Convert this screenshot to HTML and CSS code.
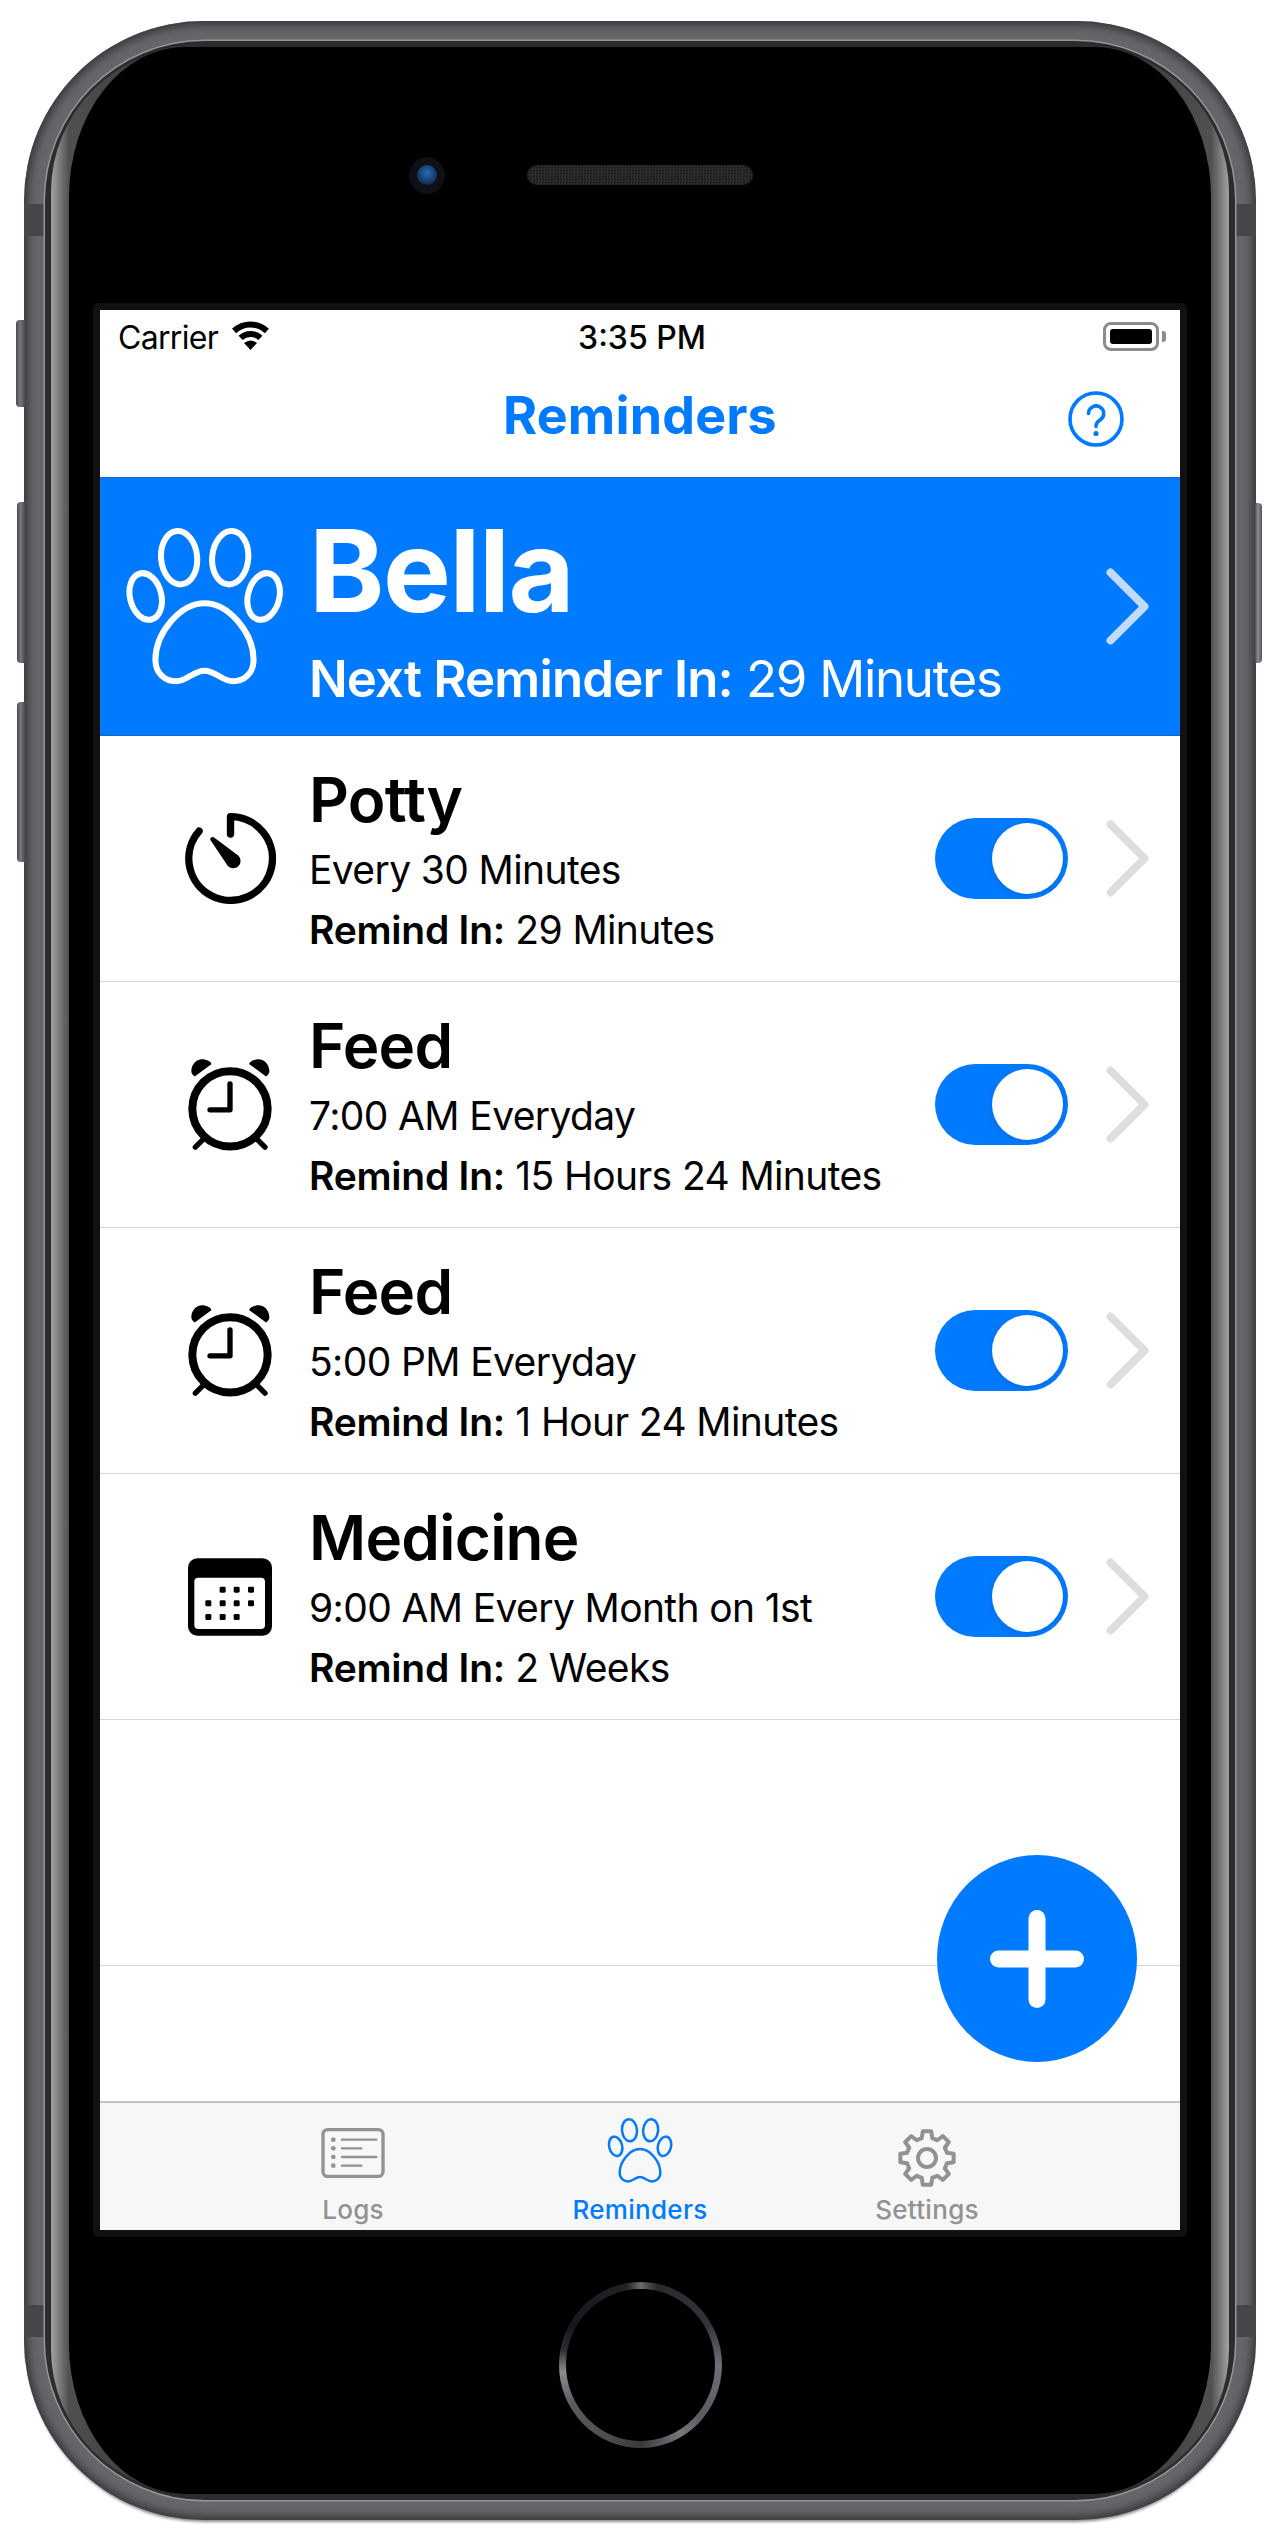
FILE: index.html
```html
<!DOCTYPE html>
<html lang="en">
<head>
<meta charset="utf-8">
<title>Reminders</title>
<link rel="stylesheet" href="styles.css">
</head>
<body>
<svg class="defs" width="0" height="0" aria-hidden="true">
  <symbol id="paw" viewBox="108 175 470 470">
    <ellipse cx="267" cy="264" rx="54" ry="80" transform="rotate(-5 267 264)"/>
    <ellipse cx="420" cy="264" rx="54" ry="80" transform="rotate(5 420 264)"/>
    <ellipse cx="167" cy="380" rx="47" ry="71" transform="rotate(-14 167 380)"/>
    <ellipse cx="520" cy="380" rx="47" ry="71" transform="rotate(14 520 380)"/>
    <path d="M343 400C270 400 196 490 196 570C196 610 225 634 258 634C290 634 310 602 343 602C376 602 396 634 428 634C461 634 490 610 490 570C490 490 416 400 343 400Z"/>
  </symbol>
  <symbol id="chevron" viewBox="0 0 43 77">
    <path d="M4.5 4.5L38.5 38.5L4.5 72.5"/>
  </symbol>
  <symbol id="alarm" viewBox="50 50 264 284">
    <circle cx="182" cy="205" r="113" fill="none" stroke="#000" stroke-width="24"/>
    <path d="M182 130V208H122" fill="none" stroke="#000" stroke-width="16" stroke-linecap="round" stroke-linejoin="round"/>
    <path d="M100 298L78 320M265 298L287 320" fill="none" stroke="#000" stroke-width="16" stroke-linecap="round"/>
    <path d="M66 90C68 66 88 52 108 58C118 60 126 65 126 71L76 108C70 104 65 98 66 90Z"/>
    <path d="M300 90C298 66 278 52 258 58C248 60 240 65 240 71L290 108C296 104 301 98 300 90Z"/>
  </symbol>
</svg>

<div class="phone">
  <span class="side-btn mute"></span>
  <span class="side-btn vol-up"></span>
  <span class="side-btn vol-down"></span>
  <span class="side-btn power"></span>
  <span class="antenna top-left"></span>
  <span class="antenna top-right"></span>
  <span class="antenna bottom-left"></span>
  <span class="antenna bottom-right"></span>

  <div class="rim">
    <div class="band">
      <div class="face">
        <div class="face-top">
          <div class="camera"><span class="lens"></span></div>
          <div class="speaker"></div>
        </div>

        <div class="bezel">
          <div class="screen">
            <div class="status-bar">
              <div class="status-left">
                <span class="carrier">Carrier</span>
                <svg class="wifi" viewBox="0 0 39 29">
                  <path d="M3.1 10A24 24 0 0 1 35.9 10M9.6 16.9A14.5 14.5 0 0 1 29.4 16.9" fill="none" stroke="#000" stroke-width="6"/>
                  <path d="M19.5 29L13 22Q19.5 17 26 22Z"/>
                </svg>
              </div>
              <span class="time">3:35 PM</span>
              <div class="status-right">
                <span class="battery"><span class="battery-fill"></span></span>
                <span class="battery-nub"></span>
              </div>
            </div>

            <div class="nav-bar">
              <span></span>
              <h1 class="nav-title">Reminders</h1>
              <svg class="help" viewBox="0 0 56 56">
                <circle cx="28" cy="28" r="26"/>
                <path d="M20.5 22.5a7.6 7.6 0 1 1 11.5 6.6c-3 1.7-4 3-4 6.4"/>
                <circle class="help-dot" cx="28" cy="42.5" r="2.6"/>
              </svg>
            </div>

            <div class="dog-header">
              <div class="header-icon">
                <svg class="paw-large"><use href="#paw"/></svg>
              </div>
              <div class="header-text">
                <div class="dog-name">Bella</div>
                <div class="dog-next"><strong>Next Reminder In:</strong> 29 Minutes</div>
              </div>
              <svg class="chevron chevron-light"><use href="#chevron"/></svg>
            </div>

            <div class="row">
              <div class="row-icon">
                <svg class="icon-timer" viewBox="285 1035 272 272">
                  <path d="M421 1098V1046A125 125 0 1 1 327 1089" fill="none" stroke="#000" stroke-width="22" stroke-linecap="round" stroke-linejoin="round"/>
                  <path d="M360 1114Q362 1104 372 1108L444 1162A22 22 0 1 1 412 1192Z"/>
                </svg>
              </div>
              <div class="row-text">
                <div class="row-name">Potty</div>
                <div class="row-line first">Every 30 Minutes</div>
                <div class="row-line"><strong>Remind In:</strong> 29 Minutes</div>
              </div>
              <div class="toggle"><span class="knob"></span></div>
              <svg class="chevron"><use href="#chevron"/></svg>
            </div>

            <div class="row">
              <div class="row-icon">
                <svg class="icon-alarm"><use href="#alarm"/></svg>
              </div>
              <div class="row-text">
                <div class="row-name">Feed</div>
                <div class="row-line first">7:00 AM Everyday</div>
                <div class="row-line"><strong>Remind In:</strong> 15 Hours 24 Minutes</div>
              </div>
              <div class="toggle"><span class="knob"></span></div>
              <svg class="chevron"><use href="#chevron"/></svg>
            </div>

            <div class="row">
              <div class="row-icon">
                <svg class="icon-alarm"><use href="#alarm"/></svg>
              </div>
              <div class="row-text">
                <div class="row-name">Feed</div>
                <div class="row-line first">5:00 PM Everyday</div>
                <div class="row-line"><strong>Remind In:</strong> 1 Hour 24 Minutes</div>
              </div>
              <div class="toggle"><span class="knob"></span></div>
              <svg class="chevron"><use href="#chevron"/></svg>
            </div>

            <div class="row">
              <div class="row-icon">
                <svg class="icon-calendar" viewBox="0 0 252 232">
                  <rect width="252" height="232" rx="28"/>
                  <rect class="cal-page" x="19" y="58" width="212" height="154" rx="12"/>
                  <g>
                    <rect x="95" y="85" width="18" height="18" rx="4"/><rect x="137" y="85" width="18" height="18" rx="4"/><rect x="180" y="85" width="18" height="18" rx="4"/>
                    <rect x="52" y="126" width="18" height="18" rx="4"/><rect x="95" y="126" width="18" height="18" rx="4"/><rect x="137" y="126" width="18" height="18" rx="4"/><rect x="180" y="126" width="18" height="18" rx="4"/>
                    <rect x="52" y="167" width="18" height="18" rx="4"/><rect x="95" y="167" width="18" height="18" rx="4"/><rect x="137" y="167" width="18" height="18" rx="4"/>
                  </g>
                </svg>
              </div>
              <div class="row-text">
                <div class="row-name">Medicine</div>
                <div class="row-line first">9:00 AM Every Month on 1st</div>
                <div class="row-line"><strong>Remind In:</strong> 2 Weeks</div>
              </div>
              <div class="toggle"><span class="knob"></span></div>
              <svg class="chevron"><use href="#chevron"/></svg>
            </div>

            <div class="row"></div>
            <div class="spacer"></div>

            <div class="tab-bar">
              <div class="tab">
                <div class="tab-icon">
                  <svg class="icon-logs" viewBox="0 0 190 150">
                    <rect class="logs-frame" x="5" y="5" width="180" height="140" rx="14"/>
                    <circle cx="36" cy="35" r="7"/><circle cx="36" cy="61" r="7"/><circle cx="36" cy="87" r="7"/><circle cx="36" cy="113" r="7"/>
                    <path class="logs-lines" d="M62 35H165M62 61H120M62 87H165M62 113H120"/>
                  </svg>
                </div>
                <span class="tab-label">Logs</span>
              </div>
              <div class="tab active">
                <div class="tab-icon">
                  <svg class="paw-small"><use href="#paw"/></svg>
                </div>
                <span class="tab-label">Reminders</span>
              </div>
              <div class="tab">
                <div class="tab-icon">
                  <svg class="icon-gear" viewBox="0 0 60 60">
                    <path d="M34.22 3.33L35.31 10.2A20.5 20.5 0 0 1 40.25 12.25L45.87 8.16L51.84 14.13L47.75 19.75A20.5 20.5 0 0 1 49.8 24.69L56.67 25.78V34.22L49.8 35.31A20.5 20.5 0 0 1 47.75 40.25L51.84 45.87L45.87 51.84L40.25 47.75A20.5 20.5 0 0 1 35.31 49.8L34.22 56.67H25.78L24.69 49.8A20.5 20.5 0 0 1 19.75 47.75L14.13 51.84L8.16 45.87L12.25 40.25A20.5 20.5 0 0 1 10.2 35.31L3.33 34.22V25.78L10.2 24.69A20.5 20.5 0 0 1 12.25 19.75L8.16 14.13L14.13 8.16L19.75 12.25A20.5 20.5 0 0 1 24.69 10.2L25.78 3.33Z"/>
                    <circle cx="30" cy="30" r="9"/>
                  </svg>
                </div>
                <span class="tab-label">Settings</span>
              </div>
            </div>

            <div class="fab">
              <svg class="fab-plus" viewBox="0 0 94 98">
                <rect x="38.5" width="17" height="98" rx="8.5"/>
                <rect y="40.5" width="94" height="17" rx="8.5"/>
              </svg>
            </div>
          </div>
        </div>

        <div class="face-bottom">
          <div class="home-btn"><span class="home-inner"></span></div>
        </div>
      </div>
    </div>
  </div>
</div>
</body>
</html>
```

FILE: styles.css
```css
* { box-sizing: border-box; }

html, body {
  margin: 0;
  padding: 0;
  background: #fff;
}

body {
  width: 1280px;
  height: 2540px;
  overflow: hidden;
  font-family: "Inter", "Liberation Sans", sans-serif;
  color: #000;
}

.defs { position: absolute; }

/* Device shell */
.phone {
  position: relative;
  width: 1232px;
  height: 2499px;
  margin: 21px 24px 20px;
  padding: 20px 21px;
  border-radius: 180px;
  background: #66666a;
  box-shadow: inset 0 0 9px 4px #37373b, 0 4px 3px -2px rgba(0, 0, 0, .45);
}

.side-btn {
  position: absolute;
  border-radius: 4px 0 0 4px;
  background: linear-gradient(90deg, #4a4a4e, #77777c 45%, #4a4a4e);
}
.mute { left: -8px; top: 299px; width: 9px; height: 87px; }
.vol-up { left: -7px; top: 481px; width: 8px; height: 161px; }
.vol-down { left: -7px; top: 681px; width: 8px; height: 160px; }
.power { right: -6px; top: 482px; width: 7px; height: 160px; border-radius: 0 4px 4px 0; background: linear-gradient(90deg, #4a4a4e, #8d8d92 40%, #55555a); }

.antenna {
  position: absolute;
  width: 21px;
  height: 32px;
  background: #47474b;
}
.top-left { left: 0; top: 183px; }
.top-right { right: 0; top: 183px; }
.bottom-left { left: 0; top: 2284px; }
.bottom-right { right: 0; top: 2284px; }

.rim {
  position: relative;
  height: 100%;
  padding: 6px;
  border-radius: 160px;
  background: #2c2c2c;
  box-shadow: 0 0 0 1.5px #96969a;
}

.band {
  height: 100%;
  padding: 0 18px;
  border-radius: 145px;
  background: linear-gradient(90deg, #a2a2a2 0, #8c8c8c 5px, #505050 18px, #3c3c3c 90px, #3c3c3c calc(100% - 90px), #505050 calc(100% - 18px), #8c8c8c calc(100% - 5px), #a2a2a2 100%);
}

.face {
  height: 100%;
  display: flex;
  flex-direction: column;
  background: #000;
  border-radius: 116px / 150px;
}

.face-top {
  height: 256px;
  display: flex;
  align-items: center;
  gap: 83px;
  padding-left: 340px;
}

.camera {
  width: 36px;
  height: 37px;
  display: flex;
  align-items: center;
  justify-content: center;
  border-radius: 50%;
  background: #0d1014;
}
.lens {
  width: 20px;
  height: 20px;
  border-radius: 50%;
  background: radial-gradient(circle at 50% 40%, #2a6fb0 0, #1b4e85 35%, #0a2240 90%);
}

.speaker {
  width: 224px;
  height: 18px;
  border-radius: 9px;
  background: repeating-conic-gradient(#2f2f2f 0 25%, #1c1c1c 0 50%) 0 0 / 3px 3px;
  box-shadow: 0 0 0 1px #262626;
}

.face-bottom {
  height: 256px;
  display: flex;
  align-items: center;
  justify-content: center;
}

.home-btn {
  width: 163px;
  height: 166px;
  padding: 7px;
  border-radius: 50%;
  background: conic-gradient(#6a6a6e 0deg, #2a2a2e 12deg, #33333a 60deg, #6e6e74 90deg, #5a5a60 130deg, #77777c 150deg, #38383c 180deg, #4a4a4e 200deg, #5a5a60 240deg, #8a8a90 265deg, #2a2a2e 282deg, #18181c 300deg, #222226 350deg, #6a6a6e 360deg);
}
.home-inner {
  display: block;
  width: 100%;
  height: 100%;
  border-radius: 50%;
  background: #000;
}

.bezel {
  height: 1934px;
  margin: 0 24px;
  padding: 7px;
  border-radius: 6px;
  background: #111;
}

/* App screen */
.screen {
  position: relative;
  width: 1080px;
  height: 1920px;
  overflow: hidden;
  background: #fff;
}

.status-bar {
  height: 52px;
  display: grid;
  grid-template-columns: 1fr auto 1fr;
  padding: 8px 14px 0 18px;
  font-size: 32px;
  line-height: 40px;
}
.status-left {
  display: flex;
  gap: 13px;
  align-items: flex-start;
}
.carrier { letter-spacing: -.7px; }
.wifi {
  width: 39px;
  height: 29px;
  margin-top: 3px;
}
.time { font-weight: 500; }
.status-right {
  display: flex;
  justify-content: flex-end;
  align-items: flex-start;
  padding-top: 4px;
}
.battery {
  width: 56px;
  height: 29px;
  padding: 4px;
  border: 3px solid #8b8b8b;
  border-radius: 8px;
  display: flex;
}
.battery-fill {
  flex: 1;
  background: #000;
  border-radius: 3px;
}
.battery-nub {
  width: 4px;
  height: 11px;
  margin: 9px 0 0 3px;
  border-radius: 0 3px 3px 0;
  background: #8b8b8b;
}

.nav-bar {
  height: 115px;
  display: grid;
  grid-template-columns: 1fr auto 1fr;
  align-items: start;
  padding-top: 24px;
}
.nav-title {
  margin: 0;
  font-size: 52px;
  line-height: 60px;
  font-weight: 700;
  letter-spacing: .15px;
  color: #007aff;
}
.help {
  justify-self: end;
  width: 56px;
  height: 56px;
  margin: 5px 56px 0 0;
  fill: none;
  stroke: #007aff;
  stroke-width: 3.6;
  stroke-linecap: round;
}
.help-dot { fill: #007aff; stroke: none; }

.dog-header {
  height: 259px;
  display: flex;
  align-items: center;
  background: #007aff;
  border-top: 1px solid #1269c4;
  border-bottom: 1px solid #1269c4;
  color: #fff;
}
.header-icon {
  width: 209px;
  padding-left: 26px;
  display: flex;
}
.paw-large {
  width: 157px;
  height: 157px;
  fill: none;
  stroke: #fff;
  stroke-width: 18;
}
.header-text {
  flex: 1;
  padding-top: 7.5px;
}
.dog-name {
  font-size: 114px;
  line-height: 120px;
  font-weight: 700;
  letter-spacing: -1.4px;
}
.dog-next {
  margin-top: 18px;
  font-size: 51px;
  line-height: 60px;
  letter-spacing: -1.3px;
}
.dog-next strong {
  font-weight: 600;
  letter-spacing: -.85px;
}

.chevron {
  width: 43px;
  height: 77px;
  margin-right: 31px;
  flex: none;
  fill: none;
  stroke: #dedede;
  stroke-width: 8;
  stroke-linecap: round;
  stroke-linejoin: round;
}
.chevron-light { stroke: #bfdcff; }

.row {
  height: 246px;
  display: flex;
  align-items: center;
  border-bottom: 1px solid #d6d6d6;
}
.row-icon {
  width: 209px;
  padding-left: 51px;
  display: flex;
  justify-content: center;
  flex: none;
}
.row-text {
  flex: 1;
  padding-top: 5px;
}
.row-name {
  font-size: 62px;
  line-height: 74px;
  font-weight: 600;
  letter-spacing: -.75px;
}
.row-line {
  font-size: 39px;
  line-height: 60px;
  letter-spacing: -.62px;
}
.row-line.first { margin-top: 3px; }
.row-line strong {
  font-weight: 600;
  letter-spacing: -.25px;
}

.icon-timer { width: 91px; height: 91px; }
.icon-alarm { width: 88px; height: 95px; }
.icon-calendar { width: 84px; height: 78px; }
.cal-page { fill: #fff; }

.toggle {
  width: 133px;
  height: 81px;
  margin-right: 38px;
  padding-right: 5px;
  display: flex;
  justify-content: flex-end;
  align-items: center;
  border-radius: 41px;
  background: #007aff;
}
.knob {
  width: 71px;
  height: 71px;
  border-radius: 50%;
  background: #fff;
  box-shadow: 0 2px 6px rgba(0, 0, 0, .12);
}

.spacer { height: 135px; }

.tab-bar {
  height: 129px;
  display: flex;
  justify-content: center;
  border-top: 2px solid #c2c2c2;
  background: #f7f7f7;
  color: #929292;
}
.tab {
  width: 287px;
  display: flex;
  flex-direction: column;
  align-items: center;
}
.tab-icon {
  height: 91px;
  display: flex;
  align-items: flex-start;
  justify-content: center;
}
.tab-label {
  font-size: 26px;
  line-height: 32px;
  font-weight: 500;
  letter-spacing: .3px;
}
.tab.active { color: #007aff; }

.icon-logs {
  width: 64px;
  height: 50px;
  margin-top: 25px;
  fill: #929292;
}
.logs-frame { fill: none; stroke: #929292; stroke-width: 10; }
.logs-lines { fill: none; stroke: #929292; stroke-width: 7; stroke-linecap: round; }
.paw-small {
  width: 66px;
  height: 65px;
  margin-top: 15px;
  fill: none;
  stroke: #007aff;
  stroke-width: 18;
}
.icon-gear {
  width: 60px;
  height: 60px;
  margin-top: 25px;
  fill: none;
  stroke: #929292;
  stroke-width: 4;
  stroke-linejoin: round;
}

.fab {
  position: absolute;
  left: 837px;
  top: 1545px;
  width: 200px;
  height: 207px;
  display: flex;
  align-items: center;
  justify-content: center;
  border-radius: 50%;
  background: #007aff;
}
.fab-plus {
  width: 94px;
  height: 98px;
  fill: #fff;
}
```
